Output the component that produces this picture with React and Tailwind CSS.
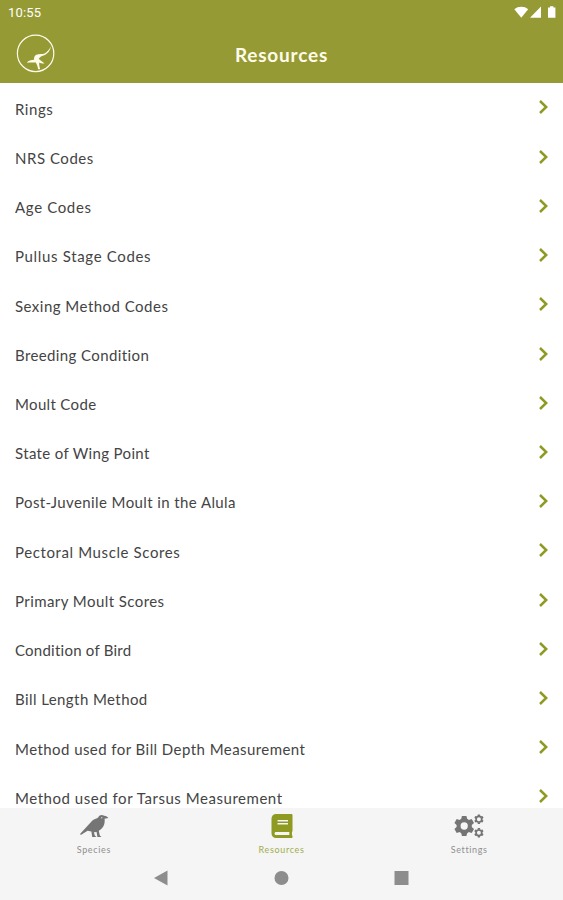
import { FaBook } from "react-icons/fa";

const items = [
  ["Rings", "tracking-[0.55px]"],
  ["NRS Codes", "tracking-[0.53px]"],
  ["Age Codes", "tracking-[0.65px]"],
  ["Pullus Stage Codes", "tracking-[0.66px]"],
  ["Sexing Method Codes", "tracking-[0.48px]"],
  ["Breeding Condition", "tracking-[0.39px]"],
  ["Moult Code", "tracking-[0.34px]"],
  ["State of Wing Point", "tracking-[0.35px]"],
  ["Post-Juvenile Moult in the Alula", "tracking-[0.4px]"],
  ["Pectoral Muscle Scores", "tracking-[0.61px]"],
  ["Primary Moult Scores", "tracking-[0.43px]"],
  ["Condition of Bird", "tracking-[0.24px]"],
  ["Bill Length Method", "tracking-[0.42px]"],
  ["Method used for Bill Depth Measurement", "tracking-[0.44px]"],
  ["Method used for Tarsus Measurement", "tracking-[0.54px]"],
];

function Logo() {
  return (
    <svg width="40" height="40" viewBox="0 0 40 40" fill="none" stroke="#fdfbea">
      <circle cx="19.6" cy="19.4" r="18.2" strokeWidth="1.2" />
      <path
        d="M34.8 12C34.6 16.5 31.5 20 27.6 21.6C25.4 22.4 23.6 23.2 22.8 24.8C23.8 26 26 27.4 28.6 29.4C26.4 29.6 24.6 29 23.2 28.4C23 30.6 23.4 32.4 24.2 35.2L22.2 35.2C21.6 32.6 21 30.6 19.8 28.6C16.8 28.4 14 28.4 10.8 28.8C12.4 26.6 15 25.8 18.2 25.8C17.6 22.6 19.4 20.6 22.4 20.2C25.6 19.8 28 20.4 30.4 18.2C32.6 16.2 34.2 14.6 34.8 12Z"
        fill="#fdfbea"
        stroke="none"
      />
    </svg>
  );
}

function StatusIcons() {
  return (
    <svg width="44" height="14" viewBox="0 0 44 14" fill="#fff">
      <path d="M0.3 3.2C4 -0.1 10.6 -0.1 14.2 3.2L7.3 11.8Z" />
      <path d="M27 0.6V11.8H16Z" />
      <path d="M34 1.6H36V0.3H39.4V1.6H41.4V11.8H34Z" />
    </svg>
  );
}

function Chevron() {
  return (
    <svg className="mr-[15px] -mt-[3px]" width="9" height="14" viewBox="0 0 9 14" fill="none" stroke="#8e9a22" strokeWidth="2.5">
      <path d="M1 1L7.2 7L1 13" />
    </svg>
  );
}

function Crow() {
  return (
    <svg width="30" height="24" viewBox="0 0 30 24" fill="currentColor">
      <path d="M0.8 20.2L13.4 6.6C15.4 4.8 18 4.8 19.3 3.2C20.4 0.8 23 0.2 25.2 1.7C27.2 1.9 28.6 2.6 29.4 4L25.6 4.8C26.2 10.2 24.4 14.2 19.8 16.8L20.8 21.4L22.6 22.9H18.4L17.6 18L14.9 18.2L15.8 21.4L17.4 22.9H13.2L12.4 17.6L8.6 16.8L2.2 20.8Z" />
      <circle cx="22.7" cy="3.7" r="0.7" fill="#d5d5d5" />
    </svg>
  );
}

// Six-toothed gear outline, centred on the origin with an outer radius of 10.
const TEETH = [0, 60, 120, 180, 240, 300];

function Gear({ x, y, scale, hub }) {
  return (
    <g transform={`translate(${x} ${y}) scale(${scale})`}>
      <circle r={(hub + 7.8) / 2} fill="none" stroke="currentColor" strokeWidth={7.8 - hub} />
      {TEETH.map((angle) => (
        <path key={angle} transform={`rotate(${angle})`} d="M-3.2 -6.4L-2.3 -10.2H2.3L3.2 -6.4Z" fill="currentColor" />
      ))}
    </g>
  );
}

function Gears() {
  return (
    <svg width="30" height="24" viewBox="0 0 30 24">
      <Gear x={10.2} y={12} scale={0.98} hub={3.7} />
      <Gear x={24.9} y={5.2} scale={0.46} hub={4.3} />
      <Gear x={24.9} y={18.8} scale={0.46} hub={4.3} />
    </svg>
  );
}

function Tab({ icon, label, color }) {
  return (
    <div className={`flex flex-1 flex-col items-center ${color}`}>
      <div className="flex h-[27px] items-center">{icon}</div>
      <span className="mt-[5px] text-[9px] leading-[12px] tracking-[0.65px] opacity-80">{label}</span>
    </div>
  );
}

export default function App() {
  return (
    <div className="flex h-[900px] w-[563px] flex-col overflow-hidden bg-white font-['Lato',sans-serif]">
      <header className="h-[83px] shrink-0 bg-[#959a35] text-white">
        <div className="flex h-[25px] items-center justify-between pl-[8px]">
          <span className="font-['Roboto',sans-serif] text-[13px] tracking-[0.2px]">10:55</span>
          <div className="mr-[5px]"><StatusIcons /></div>
        </div>
        <div className="grid h-[58px] grid-cols-[1fr_auto_1fr] items-center">
          <div className="pl-[16px]"><Logo /></div>
          <h1 className="pt-[2px] text-[19px] font-bold tracking-[0.8px] text-[#fefce9]">Resources</h1>
        </div>
      </header>
      <main className="min-h-0 flex-1 overflow-hidden pt-[1.3px]">
        {items.map(([label, tracking]) => (
          <div key={label} className="flex h-[49.23px] items-center justify-between pl-[15px]">
            <span className={`whitespace-nowrap text-[15px] text-[#444] ${tracking}`}>{label}</span>
            <Chevron />
          </div>
        ))}
      </main>
      <footer className="h-[92px] shrink-0 bg-[#f5f5f5]">
        <nav className="flex h-[48px] pt-[4px]">
          <Tab icon={<Crow />} label="Species" color="text-[#757575]" />
          <Tab icon={<FaBook size={24} />} label="Resources" color="text-[#8e9a22]" />
          <Tab icon={<Gears />} label="Settings" color="text-[#757575]" />
        </nav>
        <div className="flex h-[44px] items-center justify-center pr-[2px]">
          <svg width="256" height="16" viewBox="0 0 256 16" fill="#8d8d8d">
            <path d="M14.5 0.5V15.5L1 8Z" />
            <circle cx="128.5" cy="8" r="7" />
            <path d="M241.5 1H255.5V15H241.5Z" />
          </svg>
        </div>
      </footer>
    </div>
  );
}
